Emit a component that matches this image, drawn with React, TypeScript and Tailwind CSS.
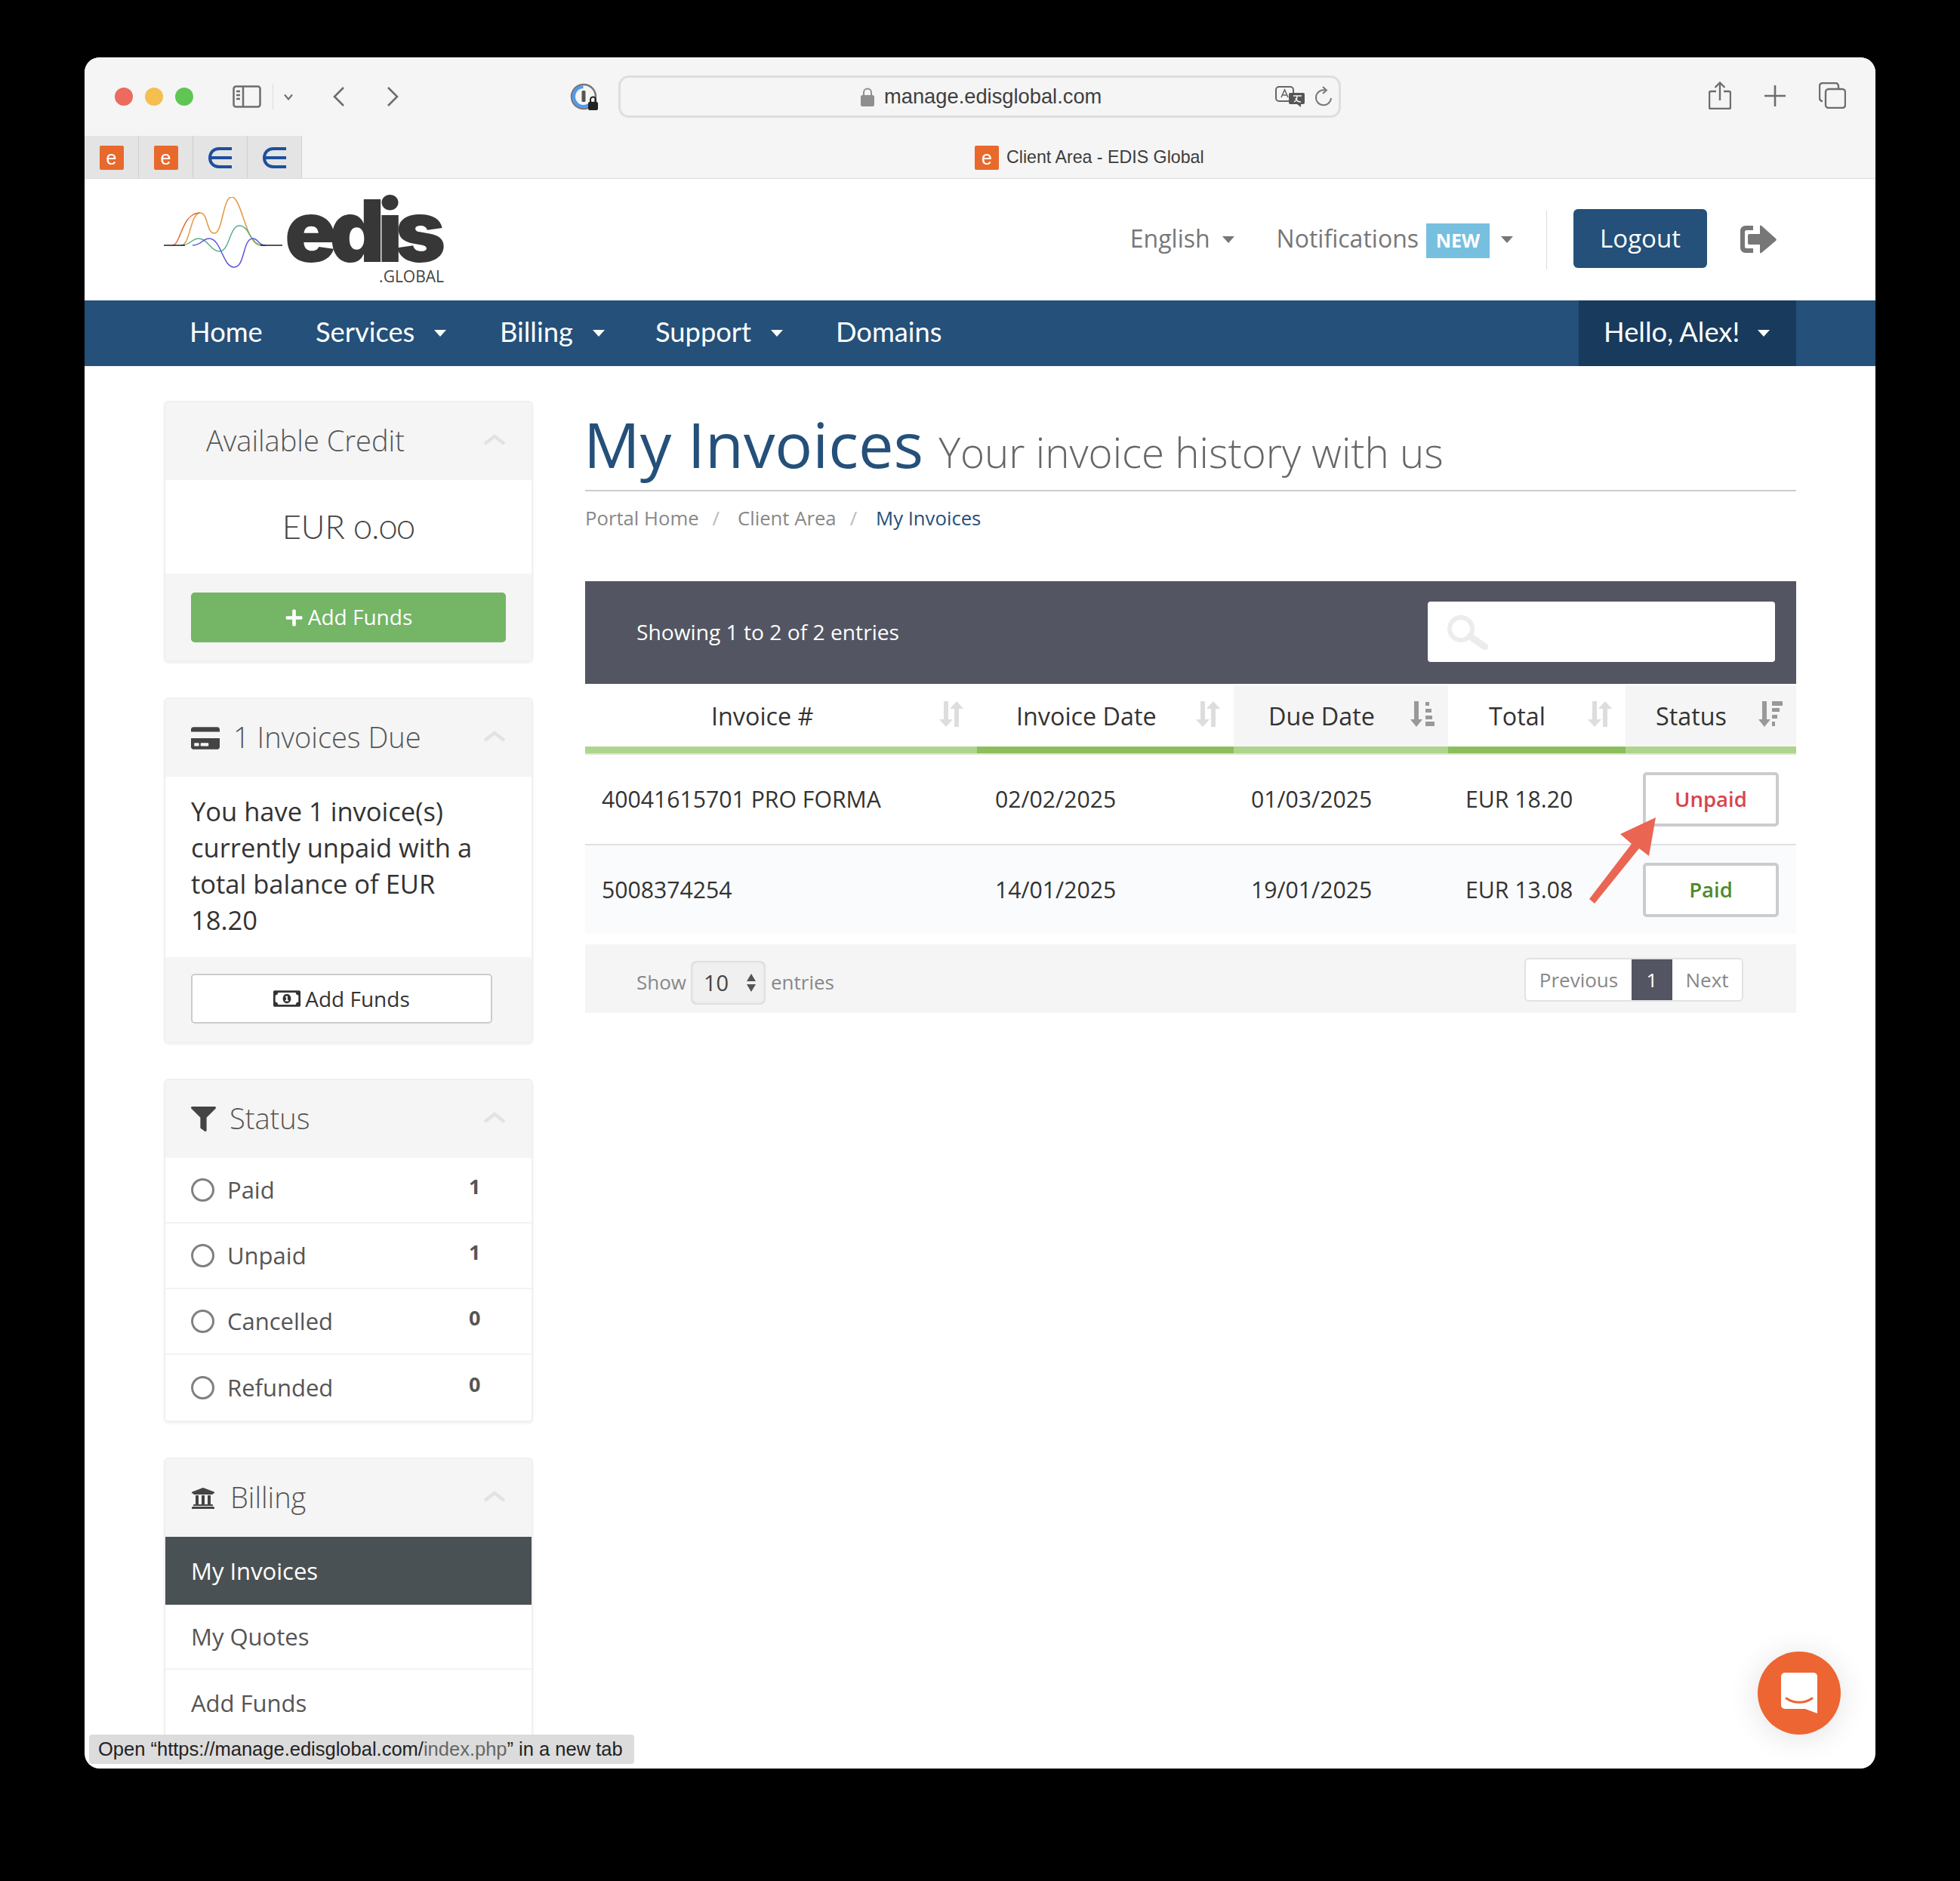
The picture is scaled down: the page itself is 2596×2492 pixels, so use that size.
import { ReactNode } from "react";
import { FaCreditCard, FaFilter, FaUniversity, FaPlus, FaRegMoneyBillAlt } from "react-icons/fa";

const Caret = ({ className }: { className: string }) => (
  <span className={`inline-block w-0 h-0 border-x-[8px] border-x-transparent border-t-[9px] ${className}`} />
);

const EdgeE = () => (
  <svg width="32" height="32" viewBox="0 0 32 32" fill="none" stroke="#1d4f9e" strokeWidth="4">
    <path d="M31 4H14C7 4 2 9 2 16s5 12 12 12h17M3 16h28" />
  </svg>
);

const Favicon = () => (
  <span className="flex items-center justify-center w-[32px] h-[32px] rounded-[2px] bg-[#e8692c] text-white text-[25px] leading-none font-['Liberation_Sans',sans-serif]">
    e
  </span>
);

const Logo = () => (
  <div className="flex items-start relative w-[371px] h-[114px]">
    <svg width="157" height="94" viewBox="217 259 157 94" fill="none" strokeWidth="1.5">
      <path d="M240 323C252 323 252 280 265 280C276 280 273 307 284 307C295 307 295 259 307 259C320 259 326 323 345 323" stroke="#e2973e" />
      <path d="M228 323C240 323 240 280 265 280" stroke="#e0703a" />
      <path d="M240 323C252 323 254 314 263 314C275 314 279 331 291 331C304 331 304 297 317 297C331 297 331 323 349 323" stroke="#58b088" />
      <path d="M255 323C267 323 268 314 277 314C293 314 295 352 310 352C325 352 321 314 335 314C342 314 342 323 352 323" stroke="#5a56d8" />
      <path d="M217 323H245M345 323H374" stroke="#222" />
    </svg>
    <span className="absolute left-[160px] top-[0px] text-[114px] leading-[90px] font-black tracking-[-10px] text-[#373737] font-['Inter',sans-serif]">
      edis
    </span>
    <span className="absolute right-[0px] bottom-[-1px] text-[21px] leading-[20px] text-[#444] font-['Open_Sans',sans-serif]">
      .GLOBAL
    </span>
  </div>
);

const Browser = () => (
  <>
    <div className="flex items-center h-[104px] bg-[#f5f5f5] pl-[40px] text-[#6d6d6d]">
      <span className="w-[24px] h-[24px] rounded-full bg-[#ec6a5e]" />
      <span className="ml-[16px] w-[24px] h-[24px] rounded-full bg-[#f4bf4f]" />
      <span className="ml-[16px] w-[24px] h-[24px] rounded-full bg-[#61c554]" />
      <svg className="ml-[52px]" width="38" height="30" viewBox="0 0 38 30" fill="none" stroke="#6d6d6d" strokeWidth="2.5">
        <rect x="1.5" y="1.5" width="35" height="27" rx="3" />
        <path d="M14 2v26M5 8h5M5 13h5M5 18h5" />
      </svg>
      <span className="ml-[15px] w-px h-[34px] bg-[#dcdcdc]" />
      <svg className="ml-[14px]" width="12" height="9" viewBox="0 0 12 9" fill="none" stroke="#6d6d6d" strokeWidth="2">
        <path d="M1 1.500l5 6 5-6" />
      </svg>
      <svg className="ml-[52px]" width="17" height="28" viewBox="0 0 17 28" fill="none" stroke="#6d6d6d" strokeWidth="2.6">
        <path d="M15 2L3 14l12 12" />
      </svg>
      <svg className="ml-[55px]" width="17" height="28" viewBox="0 0 17 28" fill="none" stroke="#6d6d6d" strokeWidth="2.6">
        <path d="M2 2l12 12L2 26" />
      </svg>
      <svg className="ml-[226px]" width="38" height="38" viewBox="0 0 38 38" fill="none">
        <circle cx="18" cy="19" r="16" stroke="#777" strokeWidth="2.500" />
        <path d="M18 6a13 13 0 1 1-11 20" stroke="#4d9bf0" strokeWidth="4" transform="rotate(120 18 19)" />
        <rect x="15.500" y="11" width="5" height="15" rx="1.500" fill="#555" />
        <rect x="24" y="26" width="13" height="11" rx="2" fill="#222" />
        <path d="M27 26v-3a3.500 3.500 0 0 1 7 0v3" stroke="#222" strokeWidth="2" />
      </svg>
      <div className="ml-[26px] flex items-center w-[957px] h-[56px] rounded-[14px] border-[3px] border-[#dedede] bg-[#f5f5f5]">
        <svg className="ml-[318px]" width="18" height="25" viewBox="0 0 18 25" fill="#8f8f8f">
          <rect y="10" width="18" height="15" rx="2.500" />
          <path d="M4 11V6.500a5 5 0 0 1 10 0V11" fill="none" stroke="#8f8f8f" strokeWidth="2" />
        </svg>
        <span className="ml-[13px] text-[27.300px] leading-none text-[#3f3f3f] font-['Liberation_Sans',sans-serif]">manage.edisglobal.com</span>
        <svg className="ml-auto" width="40" height="28" viewBox="0 0 40 28">
          <rect x="1" y="1" width="23" height="19" rx="4" fill="none" stroke="#666" strokeWidth="2" />
          <path d="M8 15l4.500-10 4.500 10M9.500 12h6" fill="none" stroke="#666" strokeWidth="1.600" />
          <path d="M20 9h17a2 2 0 0 1 2 2v11a2 2 0 0 1-2 2h-3v4l-5-4h-9a2 2 0 0 1-2-2V11a2 2 0 0 1 2-2z" fill="#555" />
          <path d="M24 13h11M29 13c0 5-2 7-4 8M27 16c1 3 4 5 7 5" fill="none" stroke="#f5f5f5" strokeWidth="1.500" />
        </svg>
        <svg className="ml-[12px] mr-[8px]" width="24" height="28" viewBox="0 0 24 28" fill="none" stroke="#777" strokeWidth="2">
          <path d="M14 5.500A10 10 0 1 0 22 16" />
          <path d="M11 1l5 4.500-5 4.500" />
        </svg>
      </div>
      <svg className="ml-[487px] mb-[3px]" width="30" height="37" viewBox="0 0 30 37" fill="none" stroke="#6d6d6d" strokeWidth="2.400">
        <path d="M10 13H3a2 2 0 0 0-2 2v19a2 2 0 0 0 2 2h24a2 2 0 0 0 2-2V15a2 2 0 0 0-2-2h-7" />
        <path d="M15 25V2M8.500 8L15 1.500 21.500 8" />
      </svg>
      <svg className="ml-[43px] mb-[2px]" width="30" height="30" viewBox="0 0 30 30" fill="none" stroke="#6d6d6d" strokeWidth="2.600">
        <path d="M15 1v28M1 15h28" />
      </svg>
      <svg className="ml-[43px] mb-[3px]" width="36" height="35" viewBox="0 0 36 35" fill="none" stroke="#6d6d6d" strokeWidth="2.400">
        <rect x="9" y="9" width="26" height="25" rx="4" />
        <path d="M5 25a4 4 0 0 1-4-4V5a4 4 0 0 1 4-4h17a4 4 0 0 1 4 4v4" />
      </svg>
    </div>
    <div className="flex items-center h-[57px] bg-[#f5f5f5] border-b border-[#dcdcdc]">
      {[0, 1, 2, 3].map((i) => (
        <div key={i} className="flex items-center justify-center w-[72px] h-[56px] pt-[2px] bg-[#e4e4e4] border-r border-[#cfcfcf]">
          {i < 2 ? <Favicon /> : <EdgeE />}
        </div>
      ))}
      <div className="ml-[891px] pt-[2px] flex items-center gap-[10px]">
        <Favicon />
        <span className="text-[23.200px] leading-none text-[#3c3c3c] font-['Liberation_Sans',sans-serif]">Client Area - EDIS Global</span>
      </div>
    </div>
  </>
);

const TopBar = () => (
  <div className="flex items-center h-[161px] pl-[105px] pr-[131px] bg-white font-['Open_Sans',sans-serif]">
    <Logo />
    <div className="ml-auto flex items-center text-[32px] text-[#777]">
      <span className="mb-[3px]">English</span>
      <Caret className="ml-[16px] border-t-[#777]" />
      <span className="ml-[56px] mb-[3px]">Notifications</span>
      <span className="ml-[10px] mt-[3px] flex items-center justify-center w-[84px] h-[46px] bg-[#77bfdf] text-white text-[25px] font-bold">NEW</span>
      <Caret className="ml-[15px] border-t-[#777]" />
      <span className="ml-[44px] w-px h-[78px] bg-[#ddd]" />
      <button className="ml-[35px] mb-[3px] w-[177px] h-[78px] rounded-[6px] bg-[#24507a] text-white text-[33px]">Logout</button>
      <svg className="ml-[44px] mb-[2px]" width="48" height="38" viewBox="0 0 48 38" fill="#777">
        <path d="M17 1H7C3 1 0 4 0 8v22c0 4 3 7 7 7h10v-6H8c-1 0-2-1-2-2V9c0-1 1-2 2-2h9z" />
        <path d="M12 12h14V2c0-1 1-2 2-1l19 17c1 1 1 2 0 3L28 37c-1 1-2 0-2-1V26H12c-1 0-2-1-2-2V14c0-1 1-2 2-2z" />
      </svg>
    </div>
  </div>
);

const navItems = [
  { label: "Home", width: "w-[167px]" },
  { label: "Services", width: "w-[244px]", caret: true },
  { label: "Billing", width: "w-[206px]", caret: true },
  { label: "Support", width: "w-[239px]", caret: true },
  { label: "Domains", width: "w-[200px]" },
];

const NavBar = () => (
  <div className="flex items-center h-[87px] pl-[139px] pr-[105px] bg-[#24507a] text-white text-[36.300px] font-['Lato',sans-serif]">
    {navItems.map((n) => (
      <div key={n.label} className={`flex items-center ${n.width}`}>
        <span className="mb-[4px]">{n.label}</span>
        {n.caret && <Caret className="ml-[26px] border-t-white" />}
      </div>
    ))}
    <div className="ml-auto flex items-center w-[288px] h-full pl-[33px] bg-[#183a5c]">
      <span className="mb-[4px]">Hello, Alex!</span>
      <Caret className="ml-[24px] border-t-white" />
    </div>
  </div>
);

const Panel = ({ title, icon, children, last }: { title: string; icon?: ReactNode; children: ReactNode; last?: boolean }) => (
  <div className={`rounded-[6px] border-2 border-[#f0f0f0] shadow-[0_2px_3px_rgba(0,0,0,0.06)] overflow-hidden ${last ? "" : "mb-[47px]"}`}>
    <div className={`flex items-center h-[103px] bg-[#f5f5f5] text-[38px] font-light text-[#555] ${icon ? "pl-[34px]" : "pl-[54px]"}`}>
      {icon}
      <span className="mb-[2px]">{title}</span>
      <svg className="ml-auto mr-[34px] mb-[6px]" width="30" height="16" viewBox="0 0 30 16" fill="none" stroke="#e2e2e2" strokeWidth="4.500">
        <path d="M2 14L15 4l13 10" />
      </svg>
    </div>
    {children}
  </div>
);

const filters = [
  { label: "Paid", count: 1 },
  { label: "Unpaid", count: 1 },
  { label: "Cancelled", count: 0 },
  { label: "Refunded", count: 0 },
];

const Sidebar = () => (
  <div className="w-[489px] shrink-0">
    <Panel title="Available Credit">
      <div className="flex items-center justify-center h-[124px] bg-white text-[43.500px] font-light text-[#444] oldstyle-nums font-['Lato',sans-serif]">EUR 0.00</div>
      <div className="h-[115px] pt-[25px] px-[34px] bg-[#f5f5f5]">
        <button className="flex items-center justify-center gap-[6px] w-full h-[66px] rounded-[5px] bg-[#74b566] text-white text-[28px]">
          <FaPlus size={25} />
          <span className="mb-[2px]">Add Funds</span>
        </button>
      </div>
    </Panel>
    <Panel title="1 Invoices Due" icon={<FaCreditCard className="mr-[18px] text-[#444]" size={38} />}>
      <div className="h-[239px] px-[34px] pt-[22px] bg-white text-[34.500px] leading-[48px] text-[#333]">
        You have 1 invoice(s) currently unpaid with a total balance of EUR 18.20
      </div>
      <div className="h-[112px] pt-[22px] px-[34px] bg-[#f5f5f5]">
        <button className="flex items-center justify-center gap-[6px] w-[399px] h-[66px] rounded-[5px] border-2 border-[#ccc] bg-white text-[#333] text-[28px]">
          <FaRegMoneyBillAlt size={36} />
          Add Funds
        </button>
      </div>
    </Panel>
    <Panel title="Status" icon={<FaFilter className="mr-[18px] text-[#444]" size={33} />}>
      {filters.map((f, i) => (
        <div key={f.label} className={`flex items-center h-[87px] pl-[34px] bg-white text-[31px] text-[#555] ${i < 3 ? "border-b-2 border-[#f3f3f3]" : ""}`}>
          <span className="w-[31px] h-[31px] rounded-full border-[3px] border-[#808080]" />
          <span className="ml-[17px] w-[320px]">{f.label}</span>
          <span className="text-[27px] font-bold text-[#555] mb-[9px]">{f.count}</span>
        </div>
      ))}
    </Panel>
    <Panel title="Billing" icon={<FaUniversity className="mr-[20px] text-[#444]" size={32} />} last>
      <div className="flex items-center h-[90px] pl-[34px] bg-[#4a5154] text-white text-[31px]">My Invoices</div>
      <div className="flex items-center h-[86px] pl-[34px] bg-white text-[#555] text-[31px] border-b-2 border-[#f3f3f3]">My Quotes</div>
      <div className="flex items-center h-[88px] pl-[34px] bg-white text-[#555] text-[31px]">Add Funds</div>
    </Panel>
  </div>
);

const SortIdle = () => (
  <svg width="32" height="34" viewBox="0 0 32 34" fill="#ddd">
    <path d="M6 0h6v24h6L9 34 0 24h6zM23 0l9 10h-6v24h-6V10h-6z" />
  </svg>
);

const SortAsc = () => (
  <svg width="32" height="34" viewBox="0 0 32 34" fill="#999">
    <path d="M5 0h6v24h5l-8 10-8-10h5z" />
    <path d="M20 1h5v5h-5zM20 10h8v5h-8zM20 19h9v5h-9zM20 27h12v6H20z" />
  </svg>
);

const SortDesc = () => (
  <svg width="32" height="34" viewBox="0 0 32 34" fill="#999">
    <path d="M5 0h6v24h5l-8 10-8-10h5z" />
    <path d="M18 0h14v6H18zM18 9h10v5H18zM18 18h7v5h-7zM18 27h4v6h-4z" />
  </svg>
);

const columns = [
  { label: "Invoice #", width: "w-[519px]", bg: "bg-white", bar: "bg-[#afd48c]", pad: "pl-[167px]", iconMl: "left-[469px]", sort: <SortIdle /> },
  { label: "Invoice Date", width: "w-[340px]", bg: "bg-white", bar: "bg-[#8cbf5c]", pad: "pl-[52px]", iconMl: "left-[290px]", sort: <SortIdle /> },
  { label: "Due Date", width: "w-[284px]", bg: "bg-[#f5f5f5]", bar: "bg-[#afd48c]", pad: "pl-[46px]", iconMl: "left-[234px]", sort: <SortAsc /> },
  { label: "Total", width: "w-[235px]", bg: "bg-white", bar: "bg-[#8cbf5c]", pad: "pl-[54px]", iconMl: "left-[185px]", sort: <SortIdle /> },
  { label: "Status", width: "w-[226px]", bg: "bg-[#f5f5f5]", bar: "bg-[#afd48c]", pad: "pl-[40px]", iconMl: "left-[176px]", sort: <SortDesc /> },
];

const rows = [
  { id: "40041615701 PRO FORMA", date: "02/02/2025", due: "01/03/2025", total: "EUR 18.20", status: "Unpaid", color: "text-[#d9434e]", bg: "bg-white border-b-2 border-[#e0e0e4] h-[120px]" },
  { id: "5008374254", date: "14/01/2025", due: "19/01/2025", total: "EUR 13.08", status: "Paid", color: "text-[#4f8a2a]", bg: "bg-[#fafbfd] h-[117px]" },
];

const Table = () => (
  <div>
    <div className="flex items-center h-[136px] pl-[68px] pr-[28px] bg-[#535562] text-white text-[28.200px]">
      <span className="mb-[2px]">Showing 1 to 2 of 2 entries</span>
      <div className="ml-auto mb-[2px] flex items-center w-[460px] h-[80px] pl-[24px] rounded-[4px] bg-white">
        <svg width="56" height="48" viewBox="0 0 56 48" fill="none" stroke="#ececef">
          <circle cx="20" cy="20" r="15" strokeWidth="6" />
          <path d="M32 30l20 14" strokeWidth="9" strokeLinecap="round" />
        </svg>
      </div>
    </div>
    <div className="flex pt-[2px] bg-white">
      {columns.map((c) => (
        <div key={c.label} className={`relative ${c.width} ${c.bg}`}>
          <div className={`flex items-center h-[81px] text-[32.300px] text-[#333] ${c.pad}`}>{c.label}</div>
          <div className={`absolute top-[21px] ${c.iconMl}`}>{c.sort}</div>
          <div className={`h-[9px] ${c.bar}`} />
        </div>
      ))}
    </div>
    <div className="h-[2px] bg-[#dfe6d8]" />
    {rows.map((r) => (
      <div key={r.id} className={`flex items-center text-[30.200px] text-[#333] ${r.bg}`}>
        <span className="w-[543px] pl-[22px]">{r.id}</span>
        <span className="w-[339px]">{r.date}</span>
        <span className="w-[284px]">{r.due}</span>
        <span className="w-[235px]">{r.total}</span>
        <span className={`flex items-center justify-center w-[180px] h-[72px] rounded-[5px] border-[4px] border-[#ccc] bg-white text-[27.500px] font-semibold ${r.color}`}>
          {r.status}
        </span>
      </div>
    ))}
    <div className="flex items-center h-[91px] mt-[14px] pl-[68px] pr-[70px] bg-[#f5f5f5] text-[26px] text-[#888]">
      <span className="mt-[9px]">Show</span>
      <div className="ml-[6px] mt-[10px] flex items-center w-[99px] h-[58px] pl-[17px] rounded-[8px] bg-[#f0f0f0] shadow-[inset_0_0_4px_rgba(0,0,0,0.2)] text-[#444] text-[29px]">
        10
        <svg className="ml-auto mr-[12px]" width="14" height="24" viewBox="0 0 14 24" fill="#555">
          <path d="M7 0l6 10H1zM7 24l6-10H1z" />
        </svg>
      </div>
      <span className="ml-[7px] mt-[9px]">entries</span>
      <div className="ml-auto mt-[3px] flex h-[58px] rounded-[6px] border-2 border-[#e2e2e2] bg-white overflow-hidden">
        <span className="flex items-center justify-center w-[140px]">Previous</span>
        <span className="flex items-center justify-center w-[54px] bg-[#535562] text-white">1</span>
        <span className="flex items-center justify-center w-[92px]">Next</span>
      </div>
    </div>
  </div>
);

const Main = () => (
  <div className="flex-1 ml-[69px]">
    <div className="flex items-baseline h-[120px] border-b-2 border-[#ccc] pt-[2px]">
      <h1 className="-ml-[2px] text-[83px] leading-[110px] text-[#24507a]">My Invoices</h1>
      <span className="ml-[20px] text-[54.700px] font-light text-[#666]">Your invoice history with us</span>
    </div>
    <div className="flex items-center h-[73px] text-[25.700px] text-[#888]">
      <span>Portal Home</span>
      <span className="ml-[18px] text-[#bbb]">/</span>
      <span className="ml-[24px]">Client Area</span>
      <span className="ml-[18px] text-[#bbb]">/</span>
      <span className="ml-[25px] text-[#24507a]">My Invoices</span>
    </div>
    <div className="mt-[46px]">
      <Table />
    </div>
  </div>
);

export default function App() {
  return (
    <div className="w-[2596px] h-[2492px] pt-[76px] pl-[112px] bg-black">
      <div className="relative w-[2372px] h-[2267px] rounded-[20px] overflow-hidden bg-white font-['Open_Sans',sans-serif]">
        <Browser />
        <TopBar />
        <NavBar />
        <div className="flex pt-[46px] px-[105px]">
          <Sidebar />
          <Main />
        </div>
        <svg className="absolute left-[1990px] top-[1004px]" width="94" height="120" viewBox="2102 1080 94 120" fill="#ea6653">
          <polygon points="2193,1083 2146,1105 2161,1118 2105,1191 2112,1197 2171,1124 2184,1134" />
        </svg>
        <div className="absolute left-[6px] top-[2222px] flex items-center w-[722px] h-[39px] pl-[12px] rounded-[4px] bg-[#dcdcdc] text-[25.500px] text-[#222] font-['Liberation_Sans',sans-serif] whitespace-pre">
          Open “https://manage.edisglobal.com/<span className="text-[#666]">index.php</span>” in a new tab
        </div>
        <div className="absolute left-[2216px] top-[2112px] flex items-center justify-center w-[110px] h-[110px] rounded-full bg-[#ed6532] shadow-[0_4px_40px_rgba(0,0,0,0.12)]">
          <svg width="50" height="56" viewBox="0 0 50 56">
            <path d="M6 1h38a5 5 0 0 1 5 5v49L33 49H6a5 5 0 0 1-5-5V6a5 5 0 0 1 5-5z" fill="#fff" />
            <path d="M8 35c10 7 24 7 34 0" fill="none" stroke="#ed6532" strokeWidth="3" strokeLinecap="round" />
          </svg>
        </div>
      </div>
    </div>
  );
}
